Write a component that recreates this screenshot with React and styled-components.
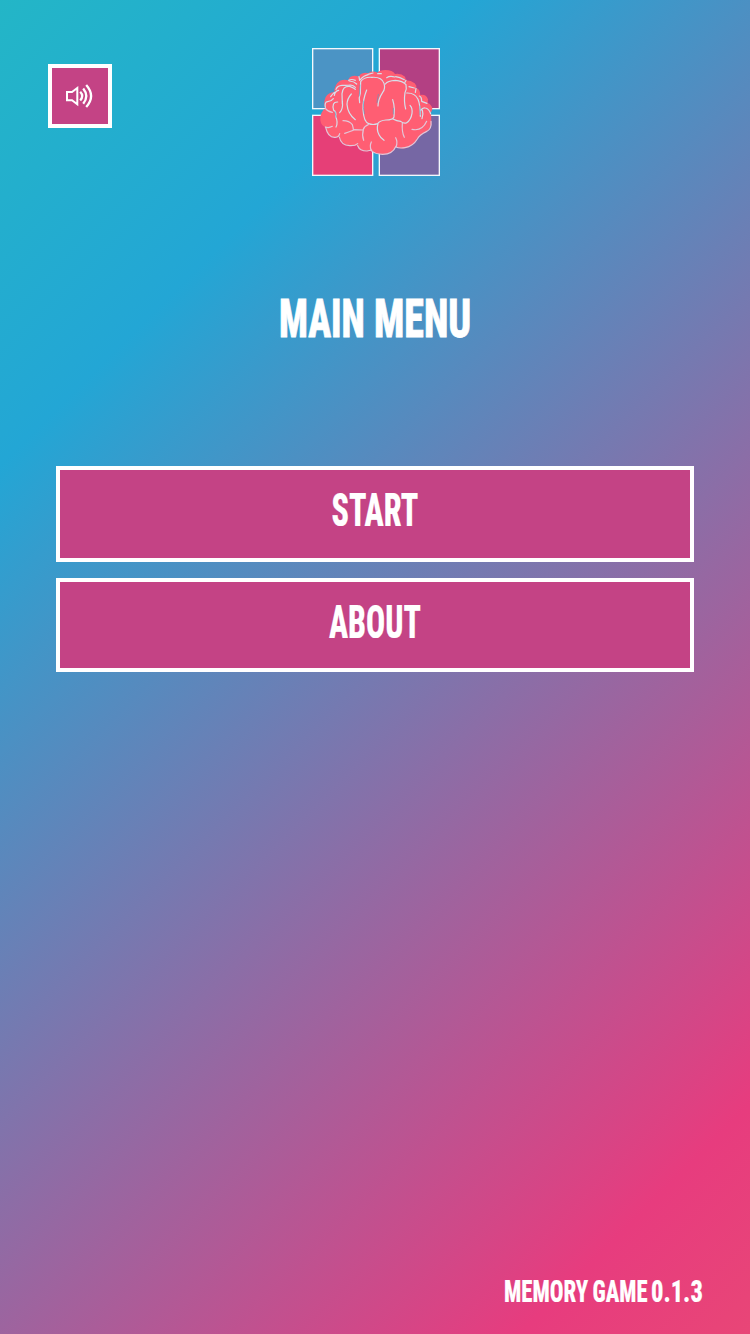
import React, { useLayoutEffect, useRef, useState } from 'react';
import styled, { createGlobalStyle } from 'styled-components';

const GlobalStyle = createGlobalStyle`
  * { box-sizing: border-box; }
  body { margin: 0; }
`;

const Page = styled.main`
  display: flex;
  flex-direction: column;
  height: 1334px;
  padding: 48px 48px 24px;
  color: #fff;
  font-family: Roboto, "Liberation Sans", sans-serif;
  font-weight: 800;
  font-stretch: 75%;
  background: linear-gradient(
    135deg,
    #23d5ab -653px,
    #23a6d5 329px,
    #e73c7e 1311px,
    #ee7752 2293px
  );
`;

const Header = styled.header`
  display: grid;
  grid-template-columns: 64px 1fr 62px;
  justify-items: center;
  height: 128px;
`;

const SoundButton = styled.button`
  display: flex;
  align-items: center;
  justify-content: center;
  width: 64px;
  height: 64px;
  margin: 16px 0 0;
  padding: 0 2px 0 0;
  color: #fff;
  background: #c44385;
  border: 4px solid #fff;
`;

const LogoSvg = styled.svg`
  display: block;
  width: 128px;
  height: 128px;
`;

const Title = styled.h1`
  display: flex;
  justify-content: center;
  gap: 11px;
  margin: 115px 0 0;
  height: 56px;
  font-size: 54px;
  line-height: 56px;
  font-weight: inherit;
`;

const Menu = styled.nav`
  display: flex;
  flex-direction: column;
  gap: 16px;
  margin: 119px 8px 0;
`;

const MenuButton = styled.button`
  display: flex;
  justify-content: center;
  height: ${(p) => p.$height}px;
  padding: 15px 0 0;
  color: #fff;
  background: #c44385;
  border: 4px solid #fff;
  font: inherit;
  font-size: 47px;
  line-height: 50px;
`;

const Footer = styled.footer`
  display: flex;
  justify-content: flex-end;
  gap: 6px;
  margin-top: auto;
  height: 38px;
  font-size: 32px;
  line-height: 38px;
`;

const WordBox = styled.span`
  display: flex;
  justify-content: center;
  width: ${(p) => p.$width}px;
`;

const WordText = styled.span`
  flex: none;
  white-space: nowrap;
  -webkit-text-stroke: ${(p) => p.$stroke}px #fff;
`;

// Condenses a word horizontally so that it fills the given width.
function Word({ width, stroke = 0.2, children }) {
  const ref = useRef(null);
  const [scale, setScale] = useState(1);
  useLayoutEffect(() => {
    setScale((width + 2) / ref.current.offsetWidth);
  }, [width]);
  return (
    <WordBox $width={width}>
      <WordText ref={ref} $stroke={stroke} style={{ transform: `scaleX(${scale})` }}>
        {children}
      </WordText>
    </WordBox>
  );
}

function SoundIcon() {
  return (
    <svg width="28" height="26" viewBox="0 0 28 26" fill="none" stroke="currentColor" strokeWidth="2">
      <path d="M2 9H7L12.3 5V21.3L7 17.2H2Z" />
      <path
        strokeWidth="2.3"
        d="M15.2 8.8Q19.2 13 15.2 17.4M18.2 5.4Q24.4 13 18.2 20.8M21.2 2Q31 13 21.2 24"
      />
    </svg>
  );
}

function Logo() {
  return (
    <LogoSvg viewBox="21 24 384 384" fill="none" strokeLinecap="round" strokeLinejoin="round">
      <g stroke="#f4f8fc" strokeWidth="4" strokeLinejoin="miter">
        <rect x="23" y="26" width="180" height="180" fill="#4b94c5" />
        <rect x="223" y="26" width="180" height="180" fill="#b34083" />
        <rect x="23" y="226" width="180" height="180" fill="#e63f77" />
        <rect x="223" y="226" width="180" height="180" fill="#7667a4" />
      </g>
      <path
        fill="#ff5e73"
        d="M46 240Q45 216 61 205Q54 190 62 171Q70 157 88 156Q88 133 105 122Q118 117 130 121Q132 108 148 107Q157 107 162 110Q164 99 181 98L190 100Q196 92 212 95L217 98Q224 90 241 90Q263 90 270 102Q288 99 300 110L303 121Q318 121 329 130Q336 137 333 144Q345 146 346 165Q363 162 369 178L368 189Q380 193 382 207L378 218Q379 232 379 247Q380 268 364 275Q344 284 337 297Q324 319 300 325Q280 326 272 320Q262 343 232 343Q205 340 199 332Q163 334 158 317Q111 320 103 291Q71 299 62 262Q48 257 46 240Z"
      />
      <g stroke="#e3c6d8" strokeWidth="3.6">
        <path d="M61 205Q68 215 82 217M62 262Q69 294 91 292Q102 291 104 281M103 291Q108 316 134 317Q150 318 158 311M158 317Q164 333 186 333L200 330" />
        <path d="M199 332Q211 343 233 343Q263 342 272 320Q281 326 300 323Q324 319 337 297Q344 284 364 275Q381 267 378 244" />
        <path d="M61 261Q71 265 82 259M114 242Q133 242 142 254Q145 264 145 270M119 280Q140 273 148 269L174 270Q178 258 190 254M175 270Q170 286 176 301M199 332Q193 318 199 306" />
        <path d="M273 321Q279 306 272 293M292 250Q290 276 298 292M321 268Q351 275 365 244" />
      </g>
      <g stroke="#d6dfea" strokeWidth="3.6">
        <path d="M61 202Q58 186 68 185Q79 184 85 176M88 157Q80 165 77 170M101 151Q90 153 88 166M93 148Q97 137 111 136Q127 137 137 135Q145 136 151 142M133 123Q147 124 155 132M131 121Q140 116 151 121M162 110L164 121Q175 107 190 104M189 103L204 99M218 101L229 101" />
        <path d="M112 192L111 161Q113 137 134 139Q145 143 151 148M98 186Q79 185 86 211Q95 216 92 229Q100 249 93 261M112 182Q115 208 104 218" />
        <path d="M164 188Q161 172 166 160L167 125Q177 110 201 112Q230 110 237 130Q242 146 233 157Q219 179 219 198M139 162Q126 177 126 193Q128 221 151 239" />
        <path d="M185 150Q173 180 174 208Q176 246 191 251Q204 256 218 251Q225 241 243 240Q263 240 267 231L268 207Q267 191 263 179M219 250Q214 270 222 284Q227 294 237 301M264 237Q275 243 287 244Q295 251 304 249Q318 240 321 220Q323 204 315 196" />
        <path d="M241 132Q248 122 271 121Q293 122 303 134Q306 146 300 158Q296 184 302 207M245 113Q255 106 269 111M272 110Q284 112 298 119M303 121L300 127M305 159Q330 158 339 178Q346 195 346 229M312 140L328 144M333 145L331 157M343 168Q350 170 350 184L366 190M347 211Q353 202 361 204Q371 205 377 221M352 210Q356 222 351 236" />
      </g>
      <g stroke="#29a7d2" strokeWidth="2" opacity=".75">
        <path d="M176 183Q173 203 178 221M220 163L216 188M265 205L265 222M90 215L93 232M165 135L163 168M345 198L345 224" />
      </g>
    </LogoSvg>
  );
}

export default function App() {
  return (
    <>
      <GlobalStyle />
      <Page>
        <Header>
          <SoundButton aria-label="Sound">
            <SoundIcon />
          </SoundButton>
          <Logo />
        </Header>
        <Title>
          <Word width={84} stroke={0.8}>MAIN</Word>
          <Word width={95} stroke={0.8}>MENU</Word>
        </Title>
        <Menu>
          <MenuButton $height={96}>
            <Word width={85}>START</Word>
          </MenuButton>
          <MenuButton $height={94}>
            <Word width={90}>ABOUT</Word>
          </MenuButton>
        </Menu>
        <Footer>
          <Word width={82}>MEMORY</Word>
          <Word width={53}>GAME</Word>
          <Word width={50}>0.1.3</Word>
        </Footer>
      </Page>
    </>
  );
}
